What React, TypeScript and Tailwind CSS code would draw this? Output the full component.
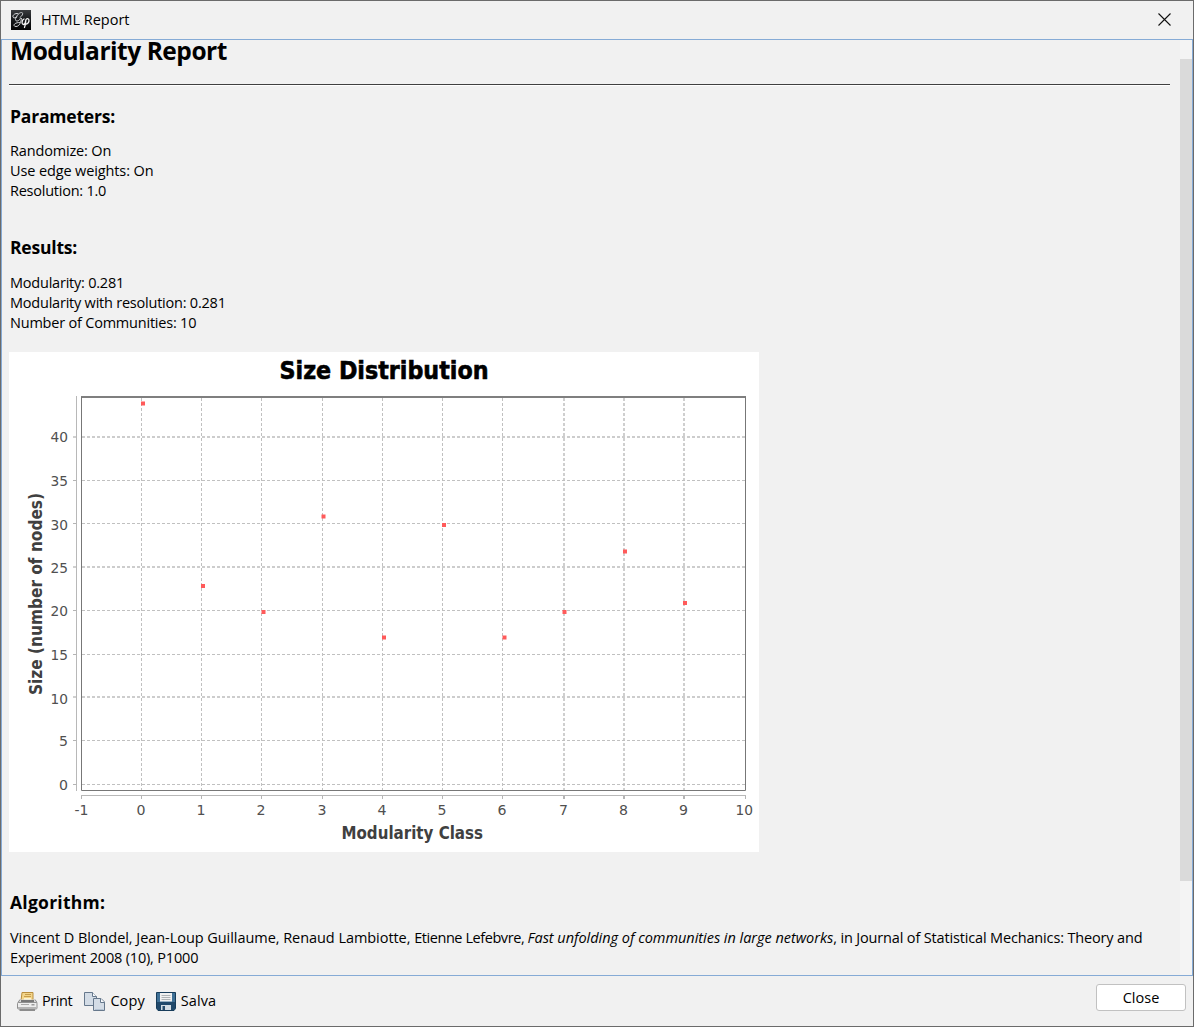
import type { ReactNode } from "react";

const X_TICKS = [81.5, 141.5, 201.5, 261.5, 322.5, 382.5, 442.5, 502.5, 564, 624, 684, 745.5];
const X_LABELS = [74.5, 136.5, 196.5, 256.5, 317.5, 377.5, 437.5, 497.5, 559, 619, 679, 735.5];
const Y_TICKS = [
  { v: 40, y: 437, base: 442, w: 2 },
  { v: 35, y: 480.5, base: 486, w: 1 },
  { v: 30, y: 523.5, base: 530, w: 1 },
  { v: 25, y: 567, base: 573, w: 2 },
  { v: 20, y: 610.5, base: 616, w: 1 },
  { v: 15, y: 654.5, base: 660, w: 1 },
  { v: 10, y: 697, base: 704, w: 2 },
  { v: 5, y: 740.5, base: 746, w: 1 },
  { v: 0, y: 784.5, base: 790, w: 1 },
];
const POINTS = [
  [143, 403.5], [203, 586], [263.5, 612], [323.5, 516.5], [384, 637.5],
  [444, 525], [504.5, 637.5], [564.5, 612], [625, 551.5], [685, 603],
];

function Chart() {
  return (
    <svg className="mt-[19px] ml-[7px] block h-[500px] w-[750px] bg-white" viewBox="9 352 750 500" fontFamily='"DejaVu Sans", sans-serif'>
      <text x="279.500" y="379" fontSize="24" fontWeight="bold" fill="#000" stroke="#000" strokeWidth="0.600" textLength="209" lengthAdjust="spacingAndGlyphs">Size Distribution</text>
      {X_TICKS.slice(1, 11).map((x) => (
        <line key={x} x1={x} x2={x} y1="398" y2="790" stroke={x % 1 ? "#c0c0c0" : "#cfcfcf"} strokeWidth={x % 1 ? 1 : 2} strokeDasharray="3 2" />
      ))}
      {Y_TICKS.map((t) => (
        <g key={t.v}>
          <line x1="82" x2="745" y1={t.y} y2={t.y} stroke={t.w === 1 ? "#c0c0c0" : "#cdcdcd"} strokeWidth={t.w} strokeDasharray="3 2" />
          <line x1="73" x2="76" y1={t.y} y2={t.y} stroke={t.w === 1 ? "#b4b4b4" : "#d0d0d0"} strokeWidth={t.w} />
          <text x={t.v > 9 ? 50.5 : 59} y={t.base} fontSize="14.5" fill="#505050" textLength={t.v > 9 ? 17.5 : 9} lengthAdjust="spacingAndGlyphs">{t.v}</text>
        </g>
      ))}
      <path d="M76.5 396V791" stroke="#b8b8b8" />
      <path d="M81 795.5H746" stroke="#b8b8b8" />
      <path d="M81 397H746" stroke="#7f7f7f" strokeWidth="2" />
      <path d="M81.5 397V790.5H745.5V397" fill="none" stroke="#777" />
      {X_TICKS.map((x, i) => (
        <g key={x}>
          <line x1={x} x2={x} y1="796" y2="799" stroke="#b4b4b4" strokeWidth={x % 1 ? 1 : 2} />
          <text
            x={X_LABELS[i]}
            y="815"
            fontSize="14.5"
            fill="#505050"
            textLength={i === 0 ? 14 : i === 11 ? 17.5 : 9}
            lengthAdjust="spacingAndGlyphs"
          >
            {i - 1}
          </text>
        </g>
      ))}
      {POINTS.map(([x, y]) => (
        <rect key={x} x={x - 2} y={y - 2} width="4" height="4" fill="#ff5a5a" />
      ))}
      <text x="341.500" y="839" fontSize="17" fontWeight="bold" fill="#404040" textLength="141.500" lengthAdjust="spacingAndGlyphs">Modularity Class</text>
      <text transform="translate(41.500 695) rotate(-90)" fontSize="17" fontWeight="bold" fill="#404040" textLength="202" lengthAdjust="spacingAndGlyphs">Size (number of nodes)</text>
    </svg>
  );
}

function GephiIcon() {
  return (
    <svg className="h-5 w-5" viewBox="0 0 20 20" fill="none" strokeLinecap="round">
      <defs>
        <linearGradient id="tile" x1="0" y1="0" x2="0" y2="1">
          <stop offset="0" stopColor="#3a3c3f" />
          <stop offset="0.5" stopColor="#16181a" />
          <stop offset="1" stopColor="#050505" />
        </linearGradient>
      </defs>
      <rect width="20" height="20" fill="url(#tile)" />
      <path d="M9 7.500C12 5.500 12.500 2.500 10.500 2.500C8 2.500 4.500 7 4.500 9.500C4.500 12 8 11.500 9.500 8.500" stroke="#c9cccf" strokeWidth="1" />
      <path d="M7 3.500C4 3 1.500 5 2 7C2.500 8.500 5 8 6 7M10.500 8.500C10 12 8.500 16.500 5 16.500C1.500 16.500 2.500 12.500 8.500 12.500" stroke="#d8dadd" strokeWidth="1" />
      <path d="M13 9C10.500 10 10.500 14.500 12.500 14.500C14.500 14.500 14.500 12 14.800 10C15.500 8 18.300 8 18 11C17.500 13.500 15.800 14.500 14.500 13.800M14.800 10C14.800 13 14.500 15.500 13.500 17.500" stroke="#f4f4f4" strokeWidth="1.3" />
    </svg>
  );
}

function PrinterIcon() {
  return (
    <svg className="h-[21px] w-[21px]" viewBox="0 0 21 21">
      <path d="M5 1.500H16V10H4Z" fill="#f3d58a" stroke="#b98d3c" />
      <path d="M8 3.500H14M7 5.500H14" stroke="#c79d4c" />
      <path d="M7 7H14V10H7Z" fill="#fdf3cf" />
      <path d="M3 8.500L1 11.500H20L18 8.500" fill="#d8d8d8" stroke="#8b8b8b" />
      <rect x="4" y="9" width="13" height="2" fill="#777" />
      <rect x="0.500" y="11.500" width="19.500" height="6.500" rx="1" fill="#ededed" stroke="#919191" />
      <rect x="4" y="13" width="8" height="1" fill="#aaa" />
      <rect x="14.500" y="13" width="3" height="1.500" fill="#999" />
      <rect x="1" y="16" width="18.500" height="2" fill="#b4b4b4" />
      <path d="M2.500 18H18V20H2.500Z" fill="#8c8c8c" />
    </svg>
  );
}

function CopyIcon() {
  return (
    <svg className="h-[21px] w-[22px]" viewBox="0 0 22 21" stroke="#66788c" fill="#d3dce6">
      <path d="M0.500 1.500H8.500L12.500 5.500V14.500H0.500Z" />
      <path d="M8.500 1.500V5.500H12.500" fill="#f8fafc" />
      <path d="M9.500 7.500H17L20.500 11V19.500H9.500Z" />
      <path d="M16.500 7.500V11.500H20.500" fill="#f8fafc" />
      <path d="M11 18.500H19.500" stroke="#b3c2d2" />
    </svg>
  );
}

function SaveIcon() {
  return (
    <svg className="h-[21px] w-5" viewBox="0 0 20 21">
      <path d="M0.500 1.500H19.500V17.500L18 19.500H2L0.500 17.500Z" fill="#3f7096" stroke="#173c5a" />
      <path d="M1 11H19V17.500L17.500 19H2.500L1 17.500Z" fill="#21496b" />
      <rect x="4" y="2" width="12" height="8.500" fill="#f1f1f1" />
      <path d="M5.500 4.500H14.500M5.500 6.500H14.500M5.500 8.500H14.500" stroke="#aeb2b5" />
      <rect x="5" y="14" width="10" height="5" fill="#d4dde4" />
      <rect x="6.500" y="15" width="2.500" height="4" fill="#284d6c" />
    </svg>
  );
}

function Heading({ className, children }: { className: string; children: ReactNode }) {
  return <h2 className={`ml-2 h-6 text-[17.5px] leading-6 font-bold ${className}`}>{children}</h2>;
}

function Action({ icon, label, className }: { icon: ReactNode; label: string; className: string }) {
  return (
    <button className="flex items-center">
      {icon}
      <span className={className}>{label}</span>
    </button>
  );
}

export default function App() {
  return (
    <div className="flex h-[1027px] w-[1194px] flex-col overflow-hidden border border-[#6b6b6b] bg-[#f1f1f1] font-['Open_Sans',sans-serif] text-[14.5px] leading-5 whitespace-nowrap text-black">
      <header className="flex h-[38px] shrink-0 items-center pl-[10px]">
        <GephiIcon />
        <span className="ml-[10px] tracking-[-0.04px]">HTML Report</span>
        <svg className="mr-[22px] mb-px ml-auto h-[13px] w-[13px]" viewBox="0 0 13 13" stroke="#111" strokeWidth="1.100">
          <path d="M0.500 0.500L12.500 12.500M12.500 0.500L0.500 12.500" />
        </svg>
      </header>

      <main className="flex h-[937px] shrink-0 border border-[#86abd6]">
        <div className="min-w-0 flex-1">
          <h1 className="ml-2 h-7 text-[24.5px] leading-[22px] font-bold tracking-[-0.46px]">Modularity Report</h1>
          <hr className="mt-4 mr-2.5 ml-[7px] h-0.5 border-t border-b border-t-[#404040] border-b-white" />
          <Heading className="mt-[18px] tracking-[-0.2px]">Parameters:</Heading>
          <div className="mt-[13px] ml-2">
            <p className="tracking-[-0.16px]">Randomize: On</p>
            <p className="tracking-[-0.12px]">Use edge weights: On</p>
            <p className="tracking-[-0.24px]">Resolution: 1.0</p>
          </div>
          <Heading className="mt-[34px] tracking-[-0.2px]">Results:</Heading>
          <div className="mt-3.5 ml-2">
            <p className="tracking-[-0.22px]">Modularity: 0.281</p>
            <p className="tracking-[-0.22px]">Modularity with resolution: 0.281</p>
            <p className="tracking-[-0.21px]">Number of Communities: 10</p>
          </div>
          <Chart />
          <Heading className="mt-[38px] tracking-[0.25px]">Algorithm:</Heading>
          <p className="mt-3.5 ml-2 tracking-[-0.155px]">
            <span className="tracking-[-0.05px]">Vincent D Blondel, Jean-Loup Guillaume, Renaud Lambiotte, </span>
            <span className="tracking-[-0.43px]">Etienne Lefebvre, </span>
            <i className="tracking-[-0.03px]">Fast unfolding of communities in large networks</i>, in Journal of Statistical Mechanics: Theory and
            <br />
            <span className="tracking-[-0.18px]">Experiment 2008 (10), P1000</span>
          </p>
        </div>
        <div className="w-3 shrink-0 bg-[#f4f4f4] pt-[19px]">
          <div className="h-[822px] bg-[#dadada]" />
        </div>
      </main>

      <footer className="flex flex-1 items-center pl-4">
        <div className="flex gap-3">
          <Action icon={<PrinterIcon />} label="Print" className="ml-1 tracking-[-0.4px]" />
          <Action icon={<CopyIcon />} label="Copy" className="-mr-px ml-1 tracking-[0.1px]" />
          <Action icon={<SaveIcon />} label="Salva" className="ml-[5px] tracking-[0.1px]" />
        </div>
        <button className="mr-[7px] mb-[7px] ml-auto flex h-[27px] w-[90px] items-center justify-center rounded-[3px] border border-[#c1c1c1] bg-white">
          Close
        </button>
      </footer>
    </div>
  );
}
